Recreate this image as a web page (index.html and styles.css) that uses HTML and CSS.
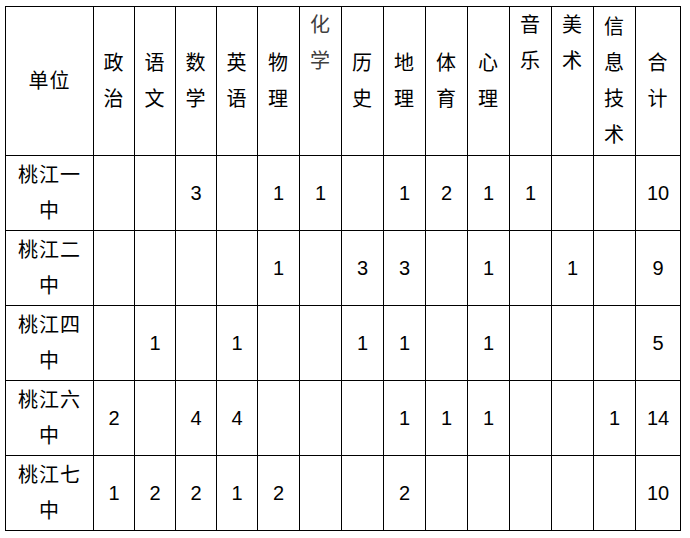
FILE: index.html
```html
<!DOCTYPE html>
<html lang="zh-CN">
<head>
<meta charset="utf-8">
<title>学科教师分配表</title>
<link rel="stylesheet" href="styles.css">
</head>
<body>
<table class="grid">
  <colgroup>
    <col class="c-unit">
    <col class="c41"><col class="c41"><col class="c41"><col class="c41">
    <col class="c42"><col class="c42"><col class="c42"><col class="c42"><col class="c42">
    <col class="c42"><col class="c42"><col class="c42"><col class="c42">
    <col class="c-total">
  </colgroup>
  <thead>
    <tr class="head">
      <th>单位</th>
      <th>政治</th>
      <th>语文</th>
      <th>数学</th>
      <th>英语</th>
      <th>物理</th>
      <th class="top muted">化学</th>
      <th>历史</th>
      <th>地理</th>
      <th>体育</th>
      <th>心理</th>
      <th class="top">音乐</th>
      <th class="top">美术</th>
      <th>信息技术</th>
      <th>合计</th>
    </tr>
  </thead>
  <tbody>
    <tr class="row">
      <td class="unit">桃江一中</td>
      <td></td><td></td><td>3</td><td></td><td>1</td><td>1</td><td></td><td>1</td><td>2</td><td>1</td><td>1</td><td></td><td></td><td>10</td>
    </tr>
    <tr class="row">
      <td class="unit">桃江二中</td>
      <td></td><td></td><td></td><td></td><td>1</td><td></td><td>3</td><td>3</td><td></td><td>1</td><td></td><td>1</td><td></td><td>9</td>
    </tr>
    <tr class="row">
      <td class="unit">桃江四中</td>
      <td></td><td>1</td><td></td><td>1</td><td></td><td></td><td>1</td><td>1</td><td></td><td>1</td><td></td><td></td><td></td><td>5</td>
    </tr>
    <tr class="row">
      <td class="unit">桃江六中</td>
      <td>2</td><td></td><td>4</td><td>4</td><td></td><td></td><td></td><td>1</td><td>1</td><td>1</td><td></td><td></td><td>1</td><td>14</td>
    </tr>
    <tr class="row">
      <td class="unit">桃江七中</td>
      <td>1</td><td>2</td><td>2</td><td>1</td><td>2</td><td></td><td></td><td>2</td><td></td><td></td><td></td><td></td><td></td><td>10</td>
    </tr>
  </tbody>
</table>
</body>
</html>
```
FILE: styles.css
```css
html, body {
  margin: 0;
  padding: 0;
  background: #ffffff;
}

body {
  padding: 6px 0 0 5px;
  font-family: "Liberation Sans", "Noto Sans CJK SC", sans-serif;
  color: #000000;
}

.grid {
  border-collapse: collapse;
  table-layout: fixed;
  width: 676px;
}

.c-unit { width: 88px; }
.c41 { width: 41px; }
.c42 { width: 42px; }
.c-total { width: 45px; }

.grid th,
.grid td {
  border: 1px solid #000000;
  padding: 0 2px;
  font-size: 20px;
  font-weight: normal;
  line-height: 36px;
  letter-spacing: 1px;
  text-align: center;
  vertical-align: middle;
  word-break: break-all;
}

.grid td {
  letter-spacing: 0;
}

.grid td.unit {
  letter-spacing: 1px;
  padding: 0 5px;
}

.head {
  height: 149px;
}

.row {
  height: 75px;
}

.grid th.top {
  vertical-align: top;
}

.grid th.muted {
  color: #404040;
}
```
